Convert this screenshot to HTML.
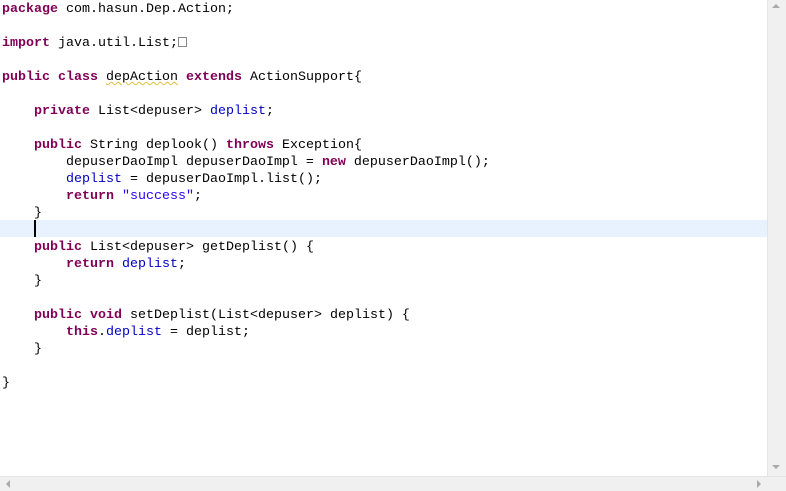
<!DOCTYPE html>
<html><head><style>
body{margin:0;width:786px;height:491px;overflow:hidden;background:#fff;position:relative;font-family:"Liberation Mono",monospace;}
#code{position:absolute;left:2px;top:1px;font-size:13.33px;line-height:17px;white-space:pre;color:#000;}
.k{color:#7f0055;font-weight:bold}
.f{color:#0000c0}
.s{color:#2a00ff}
.hl{position:absolute;left:0;top:220px;width:767px;height:17px;background:#e8f2fe}
.cur{position:absolute;left:34px;top:220px;width:2px;height:17px;background:#000}
.vs{position:absolute;left:767px;top:0;width:19px;height:476px;background:#f0f0f0;border-left:1px solid #e4e4e4;box-sizing:border-box}
.hs{position:absolute;left:0;top:476px;width:786px;height:15px;background:#f0f0f0;border-top:1px solid #e4e4e4;box-sizing:border-box}
.u{text-decoration:underline wavy #e0c040;text-decoration-thickness:1px}
.box{display:inline-block;width:9px;height:10px;border:1px solid #888;box-sizing:border-box;vertical-align:-1px}
.tri{position:absolute;width:0;height:0}
</style></head><body>
<div class="hl"></div>
<div class="cur"></div>
<div id="code"><span class="k">package</span> com.hasun.Dep.Action;

<span class="k">import</span> java.util.List;<span class="box"></span>

<span class="k">public</span> <span class="k">class</span> <span class="u">depAction</span> <span class="k">extends</span> ActionSupport{

    <span class="k">private</span> List&lt;depuser&gt; <span class="f">deplist</span>;

    <span class="k">public</span> String deplook() <span class="k">throws</span> Exception{
        depuserDaoImpl depuserDaoImpl = <span class="k">new</span> depuserDaoImpl();
        <span class="f">deplist</span> = depuserDaoImpl.list();
        <span class="k">return</span> <span class="s">"success"</span>;
    }

    <span class="k">public</span> List&lt;depuser&gt; getDeplist() {
        <span class="k">return</span> <span class="f">deplist</span>;
    }

    <span class="k">public</span> <span class="k">void</span> setDeplist(List&lt;depuser&gt; deplist) {
        <span class="k">this</span>.<span class="f">deplist</span> = deplist;
    }

}</div>
<div class="vs"></div>
<div class="hs"></div>
<div class="tri" style="left:772px;top:4px;border-left:4px solid transparent;border-right:4px solid transparent;border-bottom:4px solid #aaa"></div>
<div class="tri" style="left:772px;top:465px;border-left:4px solid transparent;border-right:4px solid transparent;border-top:4px solid #aaa"></div>
<div class="tri" style="left:6px;top:480px;border-top:4px solid transparent;border-bottom:4px solid transparent;border-right:4px solid #aaa"></div>
<div class="tri" style="left:757px;top:480px;border-top:4px solid transparent;border-bottom:4px solid transparent;border-left:4px solid #aaa"></div>
</body></html>
